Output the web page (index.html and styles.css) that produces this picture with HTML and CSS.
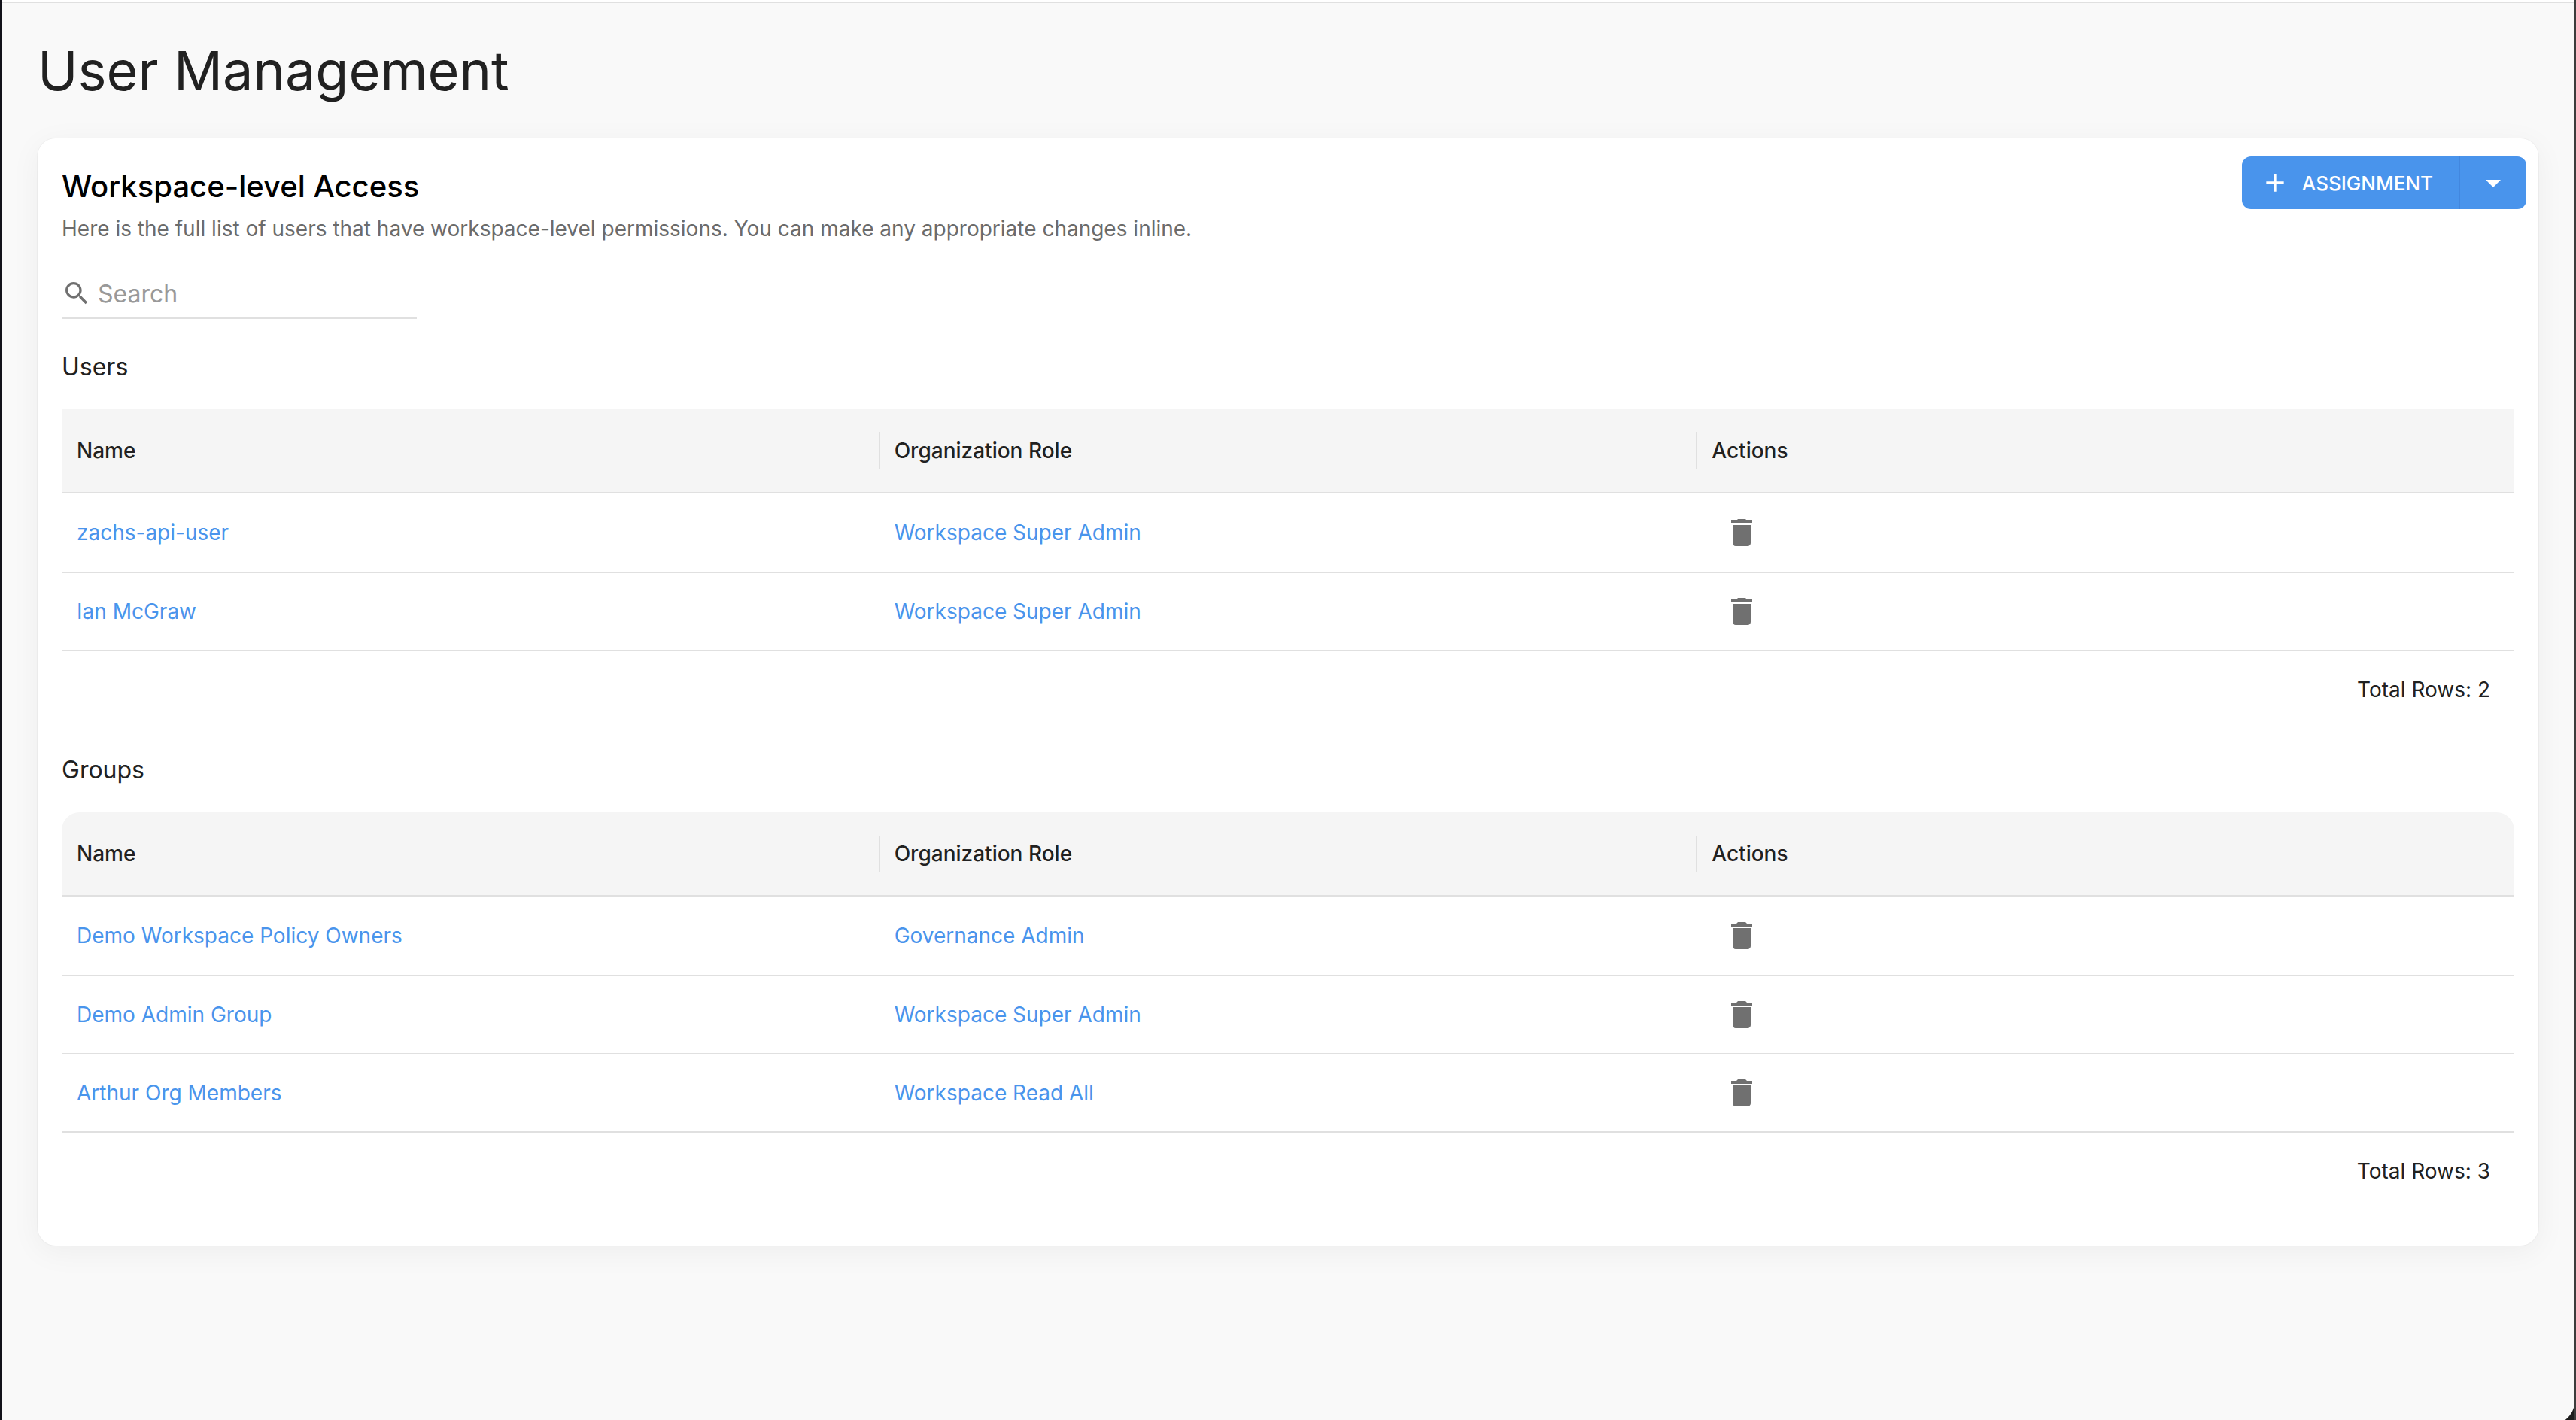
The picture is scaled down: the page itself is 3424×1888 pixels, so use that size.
FILE: index.html
```
<!DOCTYPE html>
<html lang="en">
<head>
  <meta charset="utf-8">
  <title>User Management</title>
  <link rel="stylesheet" href="styles.css">
</head>
<body>
  <!-- shared icons -->
  <svg class="sprite" aria-hidden="true">
    <symbol id="icon-trash" viewBox="0 0 24 24">
      <path d="M6 19c0 1.100.900 2 2 2h8c1.100 0 2-.900 2-2V7H6v12zM19 4h-3.500l-1-1h-5l-1 1H5v2h14V4z"/>
    </symbol>
  </svg>

  <div class="page">
    <h1>User Management</h1>

    <main class="card">
      <div class="card-header">
        <div class="card-title">
          <h2>Workspace-level Access</h2>
          <p>Here is the full list of users that have workspace-level permissions. You can make any appropriate changes inline.</p>
        </div>
        <div class="button-group">
          <button type="button" class="btn-main">
            <svg class="icon-plus" viewBox="0 0 24 24" aria-hidden="true"><path d="M19 13h-6v6h-2v-6H5v-2h6V5h2v6h6v2z"/></svg>
            ASSIGNMENT
          </button>
          <button type="button" class="btn-drop" aria-label="More options">
            <svg class="icon" viewBox="0 0 24 24" aria-hidden="true"><path d="M7 10l5 5 5-5z"/></svg>
          </button>
        </div>
      </div>

      <div class="card-body">
        <label class="search">
          <svg viewBox="0 0 24 24" aria-hidden="true"><path d="M15.500 14h-.790l-.280-.270C15.410 12.590 16 11.110 16 9.500 16 5.910 13.090 3 9.500 3S3 5.910 3 9.500 5.910 16 9.500 16c1.610 0 3.090-.590 4.230-1.570l.270.280v.790l5 4.990L20.490 19l-4.990-5zm-6 0C7.010 14 5 11.990 5 9.500S7.010 5 9.500 5 14 7.010 14 9.500 11.990 14 9.500 14z"/></svg>
          <input type="text" placeholder="Search" aria-label="Search">
        </label>

        <section>
          <h3 id="users-title">Users</h3>
          <table aria-labelledby="users-title">
            <thead>
              <tr>
                <th>Name</th>
                <th>Organization Role</th>
                <th>Actions</th>
              </tr>
            </thead>
            <tbody>
              <tr>
                <td><a href="#">zachs-api-user</a></td>
                <td><a href="#">Workspace Super Admin</a></td>
                <td><button type="button" class="btn-delete" aria-label="Delete"><svg class="icon"><use href="#icon-trash"/></svg></button></td>
              </tr>
              <tr>
                <td><a href="#">Ian McGraw</a></td>
                <td><a href="#">Workspace Super Admin</a></td>
                <td><button type="button" class="btn-delete" aria-label="Delete"><svg class="icon"><use href="#icon-trash"/></svg></button></td>
              </tr>
            </tbody>
          </table>
          <div class="table-footer">Total Rows: 2</div>
        </section>

        <section class="groups">
          <h3 id="groups-title">Groups</h3>
          <table aria-labelledby="groups-title">
            <thead>
              <tr>
                <th>Name</th>
                <th>Organization Role</th>
                <th>Actions</th>
              </tr>
            </thead>
            <tbody>
              <tr>
                <td><a href="#">Demo Workspace Policy Owners</a></td>
                <td><a href="#">Governance Admin</a></td>
                <td><button type="button" class="btn-delete" aria-label="Delete"><svg class="icon"><use href="#icon-trash"/></svg></button></td>
              </tr>
              <tr>
                <td><a href="#">Demo Admin Group</a></td>
                <td><a href="#">Workspace Super Admin</a></td>
                <td><button type="button" class="btn-delete" aria-label="Delete"><svg class="icon"><use href="#icon-trash"/></svg></button></td>
              </tr>
              <tr>
                <td><a href="#">Arthur Org Members</a></td>
                <td><a href="#">Workspace Read All</a></td>
                <td><button type="button" class="btn-delete" aria-label="Delete"><svg class="icon"><use href="#icon-trash"/></svg></button></td>
              </tr>
            </tbody>
          </table>
          <div class="table-footer">Total Rows: 3</div>
        </section>
      </div>
    </main>

    <div class="corner"></div>
  </div>
</body>
</html>
```

FILE: styles.css
```
* {
  box-sizing: border-box;
}

body {
  margin: 0;
  font-family: Inter, "Liberation Sans", sans-serif;
  font-size: 28px;
  line-height: 40px;
  color: #212121;
  background-color: #f9f9f9;
}

h1, h2, h3, p {
  margin: 0;
}

.sprite {
  display: none;
}

.page {
  position: relative;
  min-height: 100vh;
  padding: 48px 48px 0;
  border-left: 2px solid #12121a;
  border-right: 2px solid #3c3c3c;
  overflow: hidden;
}

/* line under the app bar */
.page::before {
  content: "";
  position: absolute;
  top: 0;
  left: 0;
  right: 0;
  height: 2px;
  background-color: #fff;
  border-bottom: 2px solid #e0e0e0;
}

/* window corner */
.corner {
  position: absolute;
  right: 0;
  bottom: 0;
  width: 32px;
  height: 26px;
  background: radial-gradient(circle at 0 0, transparent 32px, #1c1c1c 33px);
}

h1 {
  padding-top: 4px;
  font-size: 72px;
  line-height: 84px;
  font-weight: 400;
}

.card {
  margin-top: 48px;
  padding: 24px 16px 48px;
  background-color: #fff;
  border-radius: 24px;
  box-shadow: 0 0 0 1px rgba(0, 0, 0, 0.03), 0 8px 40px rgba(0, 0, 0, 0.05);
}

.card-header {
  display: flex;
  align-items: flex-start;
  justify-content: space-between;
}

.card-title {
  padding: 16px 16px 0;
}

.card-body {
  padding: 0 16px;
}

h2 {
  margin-bottom: 12px;
  font-size: 40px;
  line-height: 48px;
  font-weight: 500;
  color: #000;
}

p {
  color: #6b6b6b;
}

/* Buttons */
button {
  border: none;
  padding: 0;
  font-family: inherit;
  cursor: pointer;
}

.icon {
  display: block;
  width: 48px;
  height: 48px;
  fill: currentColor;
}

.button-group {
  display: flex;
  height: 70px;
  border-radius: 12px;
  overflow: hidden;
}

.button-group button {
  display: flex;
  align-items: center;
  background-color: #4994ec;
  color: #fff;
}

.button-group .btn-main {
  gap: 16px;
  padding: 0 34px 0 24px;
  border-right: 2px solid #4287df;
  font-size: 26px;
  font-weight: 500;
}

.button-group .btn-drop {
  padding: 0 20px;
}

.icon-plus {
  width: 40px;
  height: 40px;
  fill: currentColor;
}

/* Search */
.search {
  display: flex;
  align-items: center;
  gap: 8px;
  width: 472px;
  margin: 30px 0 44px;
  padding: 16px 0 12px;
  border-bottom: 2px solid #e0e0e0;
}

.search svg {
  width: 40px;
  height: 40px;
  fill: #707070;
}

.search input {
  flex: 1;
  min-width: 0;
  height: 40px;
  padding: 0;
  border: none;
  outline: none;
  background: none;
  font-family: inherit;
  font-size: 32px;
}

.search input::placeholder {
  color: #999;
}

/* Tables */
h3 {
  margin-bottom: 36px;
  font-size: 32px;
  line-height: 40px;
  font-weight: 400;
}

table {
  width: 100%;
  table-layout: fixed;
  border-spacing: 0;
}

th, td {
  height: 104px;
  padding: 0 20px;
  border-bottom: 2px solid #e0e0e0;
  text-align: left;
}

th {
  position: relative;
  height: 112px;
  background-color: #f5f5f5;
  font-weight: 500;
}

/* column separator */
th::after {
  content: "";
  position: absolute;
  z-index: 1;
  top: 31px;
  right: -1px;
  width: 2px;
  height: 48px;
  background-color: #e0e0e0;
}

th:last-child::after {
  right: 0;
  width: 1px;
}

tbody tr:first-child td {
  height: 106px;
}

.groups th:first-child {
  border-top-left-radius: 24px;
}

.groups th:last-child {
  border-top-right-radius: 24px;
}

a {
  color: #4994ec;
  text-decoration: none;
}

.btn-delete {
  margin-left: 16px;
  background: none;
  color: #707070;
  vertical-align: middle;
}

.table-footer {
  padding: 31px 32px;
  text-align: right;
}

.groups {
  margin-top: 36px;
}
```
